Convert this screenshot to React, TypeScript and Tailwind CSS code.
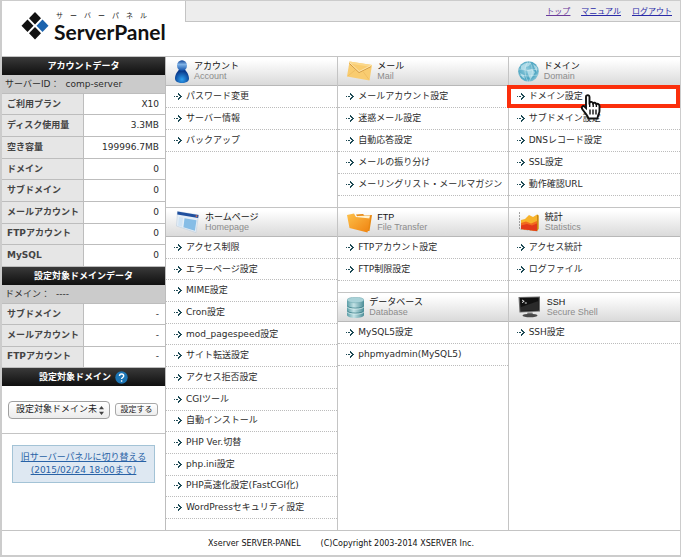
import type { ReactNode } from 'react';

type Row = [string, string];

const accountRows: Row[] = [
  ['ご利用プラン', 'X10'],
  ['ディスク使用量', '3.3MB'],
  ['空き容量', '199996.7MB'],
  ['ドメイン', '0'],
  ['サブドメイン', '0'],
  ['メールアカウント', '0'],
  ['FTPアカウント', '0'],
  ['MySQL', '0'],
];

const domainRows: Row[] = [
  ['サブドメイン', '-'],
  ['メールアカウント', '-'],
  ['FTPアカウント', '-'],
];

const Logo = () => (
  <svg width="28" height="28" viewBox="0 0 28 28">
    <path d="M14 0l6 6.3-6 6.3-6-6.3z" fill="#111" />
    <path d="M6.5 7.4l6 6.3-6 6.3-6-6.3z" fill="#111" />
    <path d="M14 15l6 6.3-6 6.3-6-6.3z" fill="#111" />
    <path d="M21.5 7.4l6 6.3-6 6.3-6-6.3z" fill="#1b63ae" />
  </svg>
);

const AccountIcon = () => (
  <svg width="14" height="23" viewBox="0 0 14 23">
    <defs>
      <radialGradient id="acc-body" cx="0.5" cy="0.75" r="0.6">
        <stop offset="0" stopColor="#2fa0f0" />
        <stop offset="1" stopColor="#0a3a8c" />
      </radialGradient>
      <linearGradient id="acc-head" x1="0" y1="0" x2="0" y2="1">
        <stop offset="0" stopColor="#0d3f93" />
        <stop offset="0.4" stopColor="#7fb2e6" />
        <stop offset="1" stopColor="#0f4fa8" />
      </linearGradient>
    </defs>
    <path d="M4.5 9h5c1.500 2 4.500 5 4.500 9.500C14 21.500 11 23 7 23s-7-1.500-7-4.500C0 14 3 11 4.500 9z" fill="url(#acc-body)" />
    <ellipse cx="7" cy="5.500" rx="5" ry="5.300" fill="url(#acc-head)" />
  </svg>
);

const MailIcon = () => (
  <svg width="25" height="20" viewBox="0 0 25 20">
    <path d="M2.500 0.500L25 4l-2.500 15.500L0 15.500z" fill="#f9cc70" />
    <path d="M2.500 0.500L25 4l-.3 2L2.200 2.500z" fill="#fbd88c" />
    <path d="M2.500 2.500l9.500 9L24 5.500" fill="none" stroke="#c98f3a" strokeWidth="0.900" />
    <path d="M0.800 15l7.500-6M22 18.500l-6-8" fill="none" stroke="#eab65a" strokeWidth="0.600" />
    <path d="M3 2l9.200 8.500L24 4.600" fill="none" stroke="#fff0c8" strokeWidth="0.700" />
  </svg>
);

const DomainIcon = () => (
  <svg width="21" height="21" viewBox="0 0 21 21">
    <defs>
      <radialGradient id="globe" cx="0.4" cy="0.4" r="0.65">
        <stop offset="0" stopColor="#8fcbdd" />
        <stop offset="0.7" stopColor="#4fa6c2" />
        <stop offset="1" stopColor="#86c3d6" />
      </radialGradient>
    </defs>
    <circle cx="10.500" cy="10.500" r="10.300" fill="url(#globe)" />
    <path d="M3 5c3-3 7-4 10-3l-2 3-3 1-1 3-4-1zM9 9l5-1 3 3-2 4-3 3-2-5zM15 3l4 3v5l-2-3zM2 12l4 2 1 4-3-2z" fill="#c9e8f1" opacity="0.700" />
    <path d="M1 8q9 3 19 0M1 14q9 2 19 0M10 0q-6 10 0 21M11 0q7 10 0 21" fill="none" stroke="#e4f4f8" strokeWidth="0.400" />
  </svg>
);

const HomepageIcon = () => (
  <svg width="25" height="22" viewBox="0 0 25 22">
    <path d="M2.500 0.500L23.500 4l-2.500 17.500L1.500 15z" fill="#e4eef7" stroke="#b9cbdc" strokeWidth="0.500" />
    <path d="M2.500 0.500L23.500 4l-.4 3L2.300 3.500z" fill="#1f4f9e" />
    <path d="M20.800 4.300l1.600.3-.2 1.500-1.600-.3z" fill="#e06a4a" />
    <path d="M4 6l4 .8-.9 9-4.100-1.300z" fill="#cfe3f4" />
    <path d="M9.500 7.200l12 2-1.600 10.500-11.500-3.500z" fill="#86bde6" />
  </svg>
);

const FolderIcon = () => (
  <svg width="25" height="21" viewBox="0 0 25 21">
    <defs>
      <linearGradient id="folder" x1="0" y1="0" x2="1" y2="1">
        <stop offset="0" stopColor="#fdc14b" />
        <stop offset="1" stopColor="#f0820f" />
      </linearGradient>
    </defs>
    <path d="M9 2.500l7-.5 1.500 1.500L25 3l-2.500 16-4 0z" fill="#e88912" />
    <path d="M10 4l13-.5-1 4.500-11-1z" fill="#fff3d2" />
    <path d="M0 3l7-1.500 2 3.500 14 1.500-2.500 14L2.500 16z" fill="url(#folder)" />
  </svg>
);

const StatsIcon = () => (
  <svg width="22" height="20" viewBox="0 0 22 20">
    <path d="M1.500 0v17l18 2" fill="none" stroke="#8a8a8a" strokeWidth="0.800" strokeDasharray="2 1" />
    <path d="M3 8l4-1 4-4 4 2 4-2.500 1.500 1V17L19 19 3 17z" fill="#f7b32b" />
    <path d="M3 11l5-1.500 5 2 6-2.500v10L3 17z" fill="#f26a1f" />
    <path d="M3 13.500l6-1.500 5 1.500 5-2V19L3 17z" fill="#e23a1a" />
    <path d="M19 2.500l1.500 1V17L19 19z" fill="#c98a12" />
  </svg>
);

const DatabaseIcon = () => (
  <svg width="17" height="21" viewBox="0 0 17 21">
    <defs>
      <linearGradient id="db" x1="0" y1="0" x2="1" y2="0">
        <stop offset="0" stopColor="#5d9fa8" />
        <stop offset="0.400" stopColor="#c4e3e6" />
        <stop offset="1" stopColor="#4b8d97" />
      </linearGradient>
    </defs>
    <path d="M0 3v15c0 4 17 4 17 0V3z" fill="url(#db)" />
    <ellipse cx="8.500" cy="3" rx="8.500" ry="2.800" fill="#a9d2d8" stroke="#6aa5ad" strokeWidth="0.500" />
    <path d="M0 8.500c0 3.500 17 3.500 17 0M0 13.500c0 3.500 17 3.500 17 0" fill="none" stroke="#3f828c" strokeWidth="0.900" />
    <path d="M0 9.500c0 3.500 17 3.500 17 0M0 14.500c0 3.500 17 3.500 17 0" fill="none" stroke="#e0f2f4" strokeWidth="0.700" />
  </svg>
);

const TerminalIcon = () => (
  <svg width="24" height="22" viewBox="0 0 24 22">
    <path d="M0.500 1l21.500-.5V15.500L1.500 16.500z" fill="#6b6b6b" />
    <path d="M1.800 2l19-.4v13L2.600 15.500z" fill="#111" />
    <path d="M3 11l17.500-6v9.300L3 15z" fill="#2a2a2a" />
    <path d="M4 4l2.200 1.300L4 6.600M6.800 7h2" fill="none" stroke="#fff" strokeWidth="0.900" />
    <path d="M9.500 16.500h5l.5 2h-6z" fill="#777" />
    <ellipse cx="12" cy="19.500" rx="7.500" ry="1.800" fill="#4a4a4a" />
  </svg>
);

const Arrow = () => (
  <svg width="8" height="7" viewBox="0 0 8 7" className="shrink-0" fill="#1d4a55" shapeRendering="crispEdges">
    <path d="M0 3h1v1H0zM2 3h2v1H2zM4 0h1v1H4zM4 1h2v1H4zM5 2h2v1H5zM6 3h2v1H6zM5 4h2v1H5zM4 5h2v1H4zM4 6h1v1H4z" />
  </svg>
);

const HandCursor = () => (
  <svg width="22" height="26" viewBox="0 0 22 26" className="absolute left-[71px] top-2 z-20">
    <path
      d="M6.500 1.500c1.500-.7 3 0 3 1.500v5.500c1-1 3-.8 3.500.7 1-.9 2.800-.5 3.200.8 1.500-.7 3.300.3 3.300 2v5c0 2.500-2 4-2 7.500H8.500C8 21.500 5 19 2.500 15.500 0.800 13.300 2.800 11.300 4.500 12.500l1.500 1.500V3c0-.7 0-1.200.5-1.500z"
      fill="#fff"
      stroke="#111"
      strokeWidth="1.900"
    />
    <path d="M9.700 8v5M13.200 9v4M16.400 10v3M10 15.500v5M13 15.500v5M16 15.500v5" stroke="#111" strokeWidth="1.400" />
  </svg>
);

type SectionProps = {
  icon: ReactNode;
  title: string;
  sub: string;
  items: string[];
  first?: boolean;
  fill?: boolean;
  active?: string;
};

const Section = ({ icon, title, sub, items, first, fill, active }: SectionProps) => (
  <section className={`flex flex-col pb-[11px] border-[#c4c4c4] ${fill ? 'flex-1' : ''}`}>
    <div
      className={`flex h-7 box-content items-center gap-[5px] pl-[9px] bg-linear-to-b from-white from-10% to-[#dadada] ${first ? '' : 'border-t border-[#c4c4c4]'}`}
    >
      {icon}
      <div className="flex flex-col font-['Liberation_Sans','Noto_Sans_CJK_JP',sans-serif] text-[9px] leading-[10px]">
        <h2 className="text-[#111]">{title}</h2>
        <span className="text-[#8c8c8c]">{sub}</span>
      </div>
    </div>
    <ul className={`flex flex-col border-t border-[#b8b8b8] ${fill ? 'flex-1' : ''}`}>
      {items.map((item) => (
        <li
          key={item}
          className={`relative flex items-center gap-1 pl-2 border-b border-dotted border-[#bcbcbc] ${fill ? 'flex-1' : 'h-[22px]'}`}
        >
          <Arrow />
          <a href="#" className="whitespace-nowrap">{item}</a>
          {item === active && (
            <>
              <span className="absolute -left-0.5 right-0 -top-px -bottom-px z-10 border-4 border-[#fb2f0c]" />
              <HandCursor />
            </>
          )}
        </li>
      ))}
    </ul>
  </section>
);

const BarTitle = ({ children }: { children: ReactNode }) => (
  <h2 className="flex h-[18px] items-center justify-center gap-1 bg-linear-to-b from-[#3a3a3a] to-[#101010] font-bold text-white">
    {children}
  </h2>
);

const DataTable = ({ rows, className }: { rows: Row[]; className: string }) => (
  <table className={`w-full border-collapse ${className}`}>
    <tbody>
      {rows.map(([label, value]) => (
        <tr key={label} className="border-b border-[#bdbdbd]">
          <th scope="row" className="w-1/2 whitespace-nowrap border-r border-[#bdbdbd] bg-[#e6e6e6] pl-[5px] text-left font-bold text-[#444]">
            {label}
          </th>
          <td className="pr-1.5 text-right">{value}</td>
        </tr>
      ))}
    </tbody>
  </table>
);

const App = () => {
  return (
    <div className="flex min-h-screen flex-col border-t border-r border-b-2 border-l-2 border-[#cccccc] bg-white font-['DejaVu_Sans','Noto_Sans_CJK_JP',sans-serif] text-[9px] leading-[13px] text-[#2b2b2b]">
      <header className="flex h-14 items-start border-b border-[#c4c4c4]">
        <div className="flex w-[183px] items-start gap-[5px] pl-[19px] pt-[11px]">
          <Logo />
          <div className="flex flex-col whitespace-nowrap">
            <span className="pl-0.5 font-['Liberation_Sans','Noto_Sans_CJK_JP',sans-serif] text-[7px] leading-[8px] text-[#222]">
              サ　ー　バ　ー　パ　ネ　ル
            </span>
            <h1 className="font-['Lato',sans-serif] text-[21px] leading-[24px] font-bold text-[#111]">ServerPanel</h1>
          </div>
        </div>
        <nav className="flex h-[21px] flex-1 items-center justify-end gap-[11px] border-b border-l border-[#c4c4c4] bg-[#ededed] pr-2 text-[8px] text-[#2a2aa8] underline">
          <a href="#" className="text-[#6a3a9a]">トップ</a>
          <a href="#">マニュアル</a>
          <a href="#">ログアウト</a>
        </nav>
      </header>

      <div className="flex flex-1">
        <aside className="w-[164px] shrink-0 border-r border-[#bdbdbd]">
          <BarTitle>アカウントデータ</BarTitle>
          <p className="flex h-[19px] items-center gap-1.5 border-b border-[#bdbdbd] bg-[#cbcbcb] pl-[3px] whitespace-nowrap">
            <span>サーバーID：</span>
            <span>comp-server</span>
          </p>
          <DataTable rows={accountRows} className="h-[173px]" />
          <BarTitle>設定対象ドメインデータ</BarTitle>
          <p className="flex h-[19px] items-center gap-1.5 border-b border-[#bdbdbd] bg-[#cbcbcb] pl-[3px]">
            <span>ドメイン：</span>
            <span>----</span>
          </p>
          <DataTable rows={domainRows} className="h-[64px]" />
          <BarTitle>
            設定対象ドメイン
            <svg width="13" height="13" viewBox="0 0 13 13">
              <circle cx="6.500" cy="6.500" r="6.200" fill="#1c75b5" />
              <path d="M4.500 5c0-2.700 4.200-2.700 4.200 0 0 1.500-2.100 1.500-2.100 3M6.600 9.200v1.500" fill="none" stroke="#fff" strokeWidth="1.400" />
            </svg>
          </BarTitle>
          <form className="flex h-12 items-center gap-[5px] border-b border-[#c4c4c4] pl-1.5">
            <div className="relative w-[102px]">
              <select
                aria-label="設定対象ドメイン"
                className="block h-[18px] w-full appearance-none rounded-[4px] border border-[#a0a0a0] bg-linear-to-b from-white to-[#ececec] pl-[7px] pr-3 text-[9px] text-[#222]"
              >
                <option>設定対象ドメイン未指定</option>
              </select>
              <svg width="5" height="9" viewBox="0 0 5 9" className="pointer-events-none absolute right-1.5 top-[5px]" fill="#444">
                <path d="M2.500 0L5 3.300H0zM2.500 9L5 5.700H0z" />
              </svg>
            </div>
            <button
              type="button"
              className="h-[13px] w-[43px] whitespace-nowrap rounded-[3px] border border-[#a8a8a8] bg-linear-to-b from-white to-[#eeeeee] text-[8px] leading-[11px] text-[#222]"
            >
              設定する
            </button>
          </form>
          <p className="mx-2.5 mt-[11px] border border-[#a3c3d6] bg-[#dee8f2] py-[5px] text-center whitespace-nowrap">
            <a href="#" className="text-[#2862a6] underline">
              旧サーバーパネルに切り替える
              <br />
              (2015/02/24 18:00まで)
            </a>
          </p>
        </aside>

        <main className="grid flex-1 grid-cols-3 grid-rows-[auto_1fr] [&>*:nth-child(3n+2)]:border-x">
          <Section
            first
            icon={<AccountIcon />}
            title="アカウント"
            sub="Account"
            items={['パスワード変更', 'サーバー情報', 'バックアップ']}
          />
          <Section
            first
            icon={<MailIcon />}
            title="メール"
            sub="Mail"
            items={['メールアカウント設定', '迷惑メール設定', '自動応答設定', 'メールの振り分け', 'メーリングリスト・メールマガジン']}
          />
          <Section
            first
            icon={<DomainIcon />}
            title="ドメイン"
            sub="Domain"
            items={['ドメイン設定', 'サブドメイン設定', 'DNSレコード設定', 'SSL設定', '動作確認URL']}
            active="ドメイン設定"
          />
          <div className="flex flex-col">
            <Section
              fill
              icon={<HomepageIcon />}
              title="ホームページ"
              sub="Homepage"
              items={[
                'アクセス制限',
                'エラーページ設定',
                'MIME設定',
                'Cron設定',
                'mod_pagespeed設定',
                'サイト転送設定',
                'アクセス拒否設定',
                'CGIツール',
                '自動インストール',
                'PHP Ver.切替',
                'php.ini設定',
                'PHP高速化設定(FastCGI化)',
                'WordPressセキュリティ設定',
              ]}
            />
          </div>
          <div className="flex flex-col border-[#c4c4c4]">
            <Section icon={<FolderIcon />} title="FTP" sub="File Transfer" items={['FTPアカウント設定', 'FTP制限設定']} />
            <Section icon={<DatabaseIcon />} title="データベース" sub="Database" items={['MySQL5設定', 'phpmyadmin(MySQL5)']} />
          </div>
          <div className="flex flex-col">
            <Section icon={<StatsIcon />} title="統計" sub="Statistics" items={['アクセス統計', 'ログファイル']} />
            <Section icon={<TerminalIcon />} title="SSH" sub="Secure Shell" items={['SSH設定']} />
          </div>
        </main>
      </div>

      <footer className="flex h-[25px] items-center justify-center gap-5 border-t border-[#c4c4c4] text-[8px] text-[#111]">
        <span>Xserver SERVER-PANEL</span>
        <span>(C)Copyright 2003-2014 XSERVER Inc.</span>
      </footer>
    </div>
  );
};

export default App;
